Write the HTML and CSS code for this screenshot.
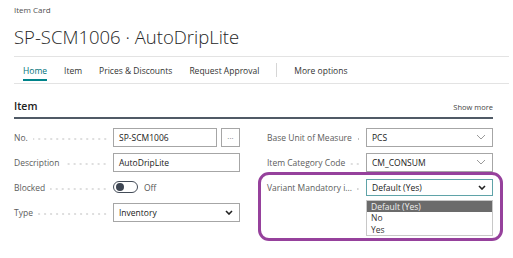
FILE: index.html
```html
<!DOCTYPE html>
<html lang="en">
  <head>
    <meta charset="UTF-8" />
    <title>Item Card</title>
    <link rel="stylesheet" href="styles.css">
  </head>
  <body>
    <div class="page">
      <div class="caption">Item Card</div>
      <h1 class="title">SP-SCM1006 · AutoDripLite</h1>

      <nav class="actions">
        <span class="action active">Home</span>
        <span class="action">Item</span>
        <span class="action">Prices &amp; Discounts</span>
        <span class="action">Request Approval</span>
        <span class="divider"></span>
        <span class="action">More options</span>
      </nav>

      <section class="fasttab">
        <div class="tab-head">
          <span class="tab-title">Item</span>
          <span class="show-more">Show more</span>
        </div>

        <div class="fields">
          <div class="column">
            <div class="field">
              <span class="label">No.</span>
              <div class="control with-button">
                <span class="input">SP-SCM1006</span>
                <span class="assist">···</span>
              </div>
            </div>
            <div class="field">
              <span class="label">Description</span>
              <div class="control">
                <span class="input">AutoDripLite</span>
              </div>
            </div>
            <div class="field">
              <span class="label">Blocked</span>
              <div class="control toggle-wrap">
                <span class="toggle"><span class="knob"></span></span>
                <span class="toggle-text">Off</span>
              </div>
            </div>
            <div class="field">
              <span class="label">Type</span>
              <div class="control">
                <span class="input select">
                  Inventory
                  <svg class="chev" width="8" height="5" viewBox="0 0 8 5"><path d="M1 1 L4 4 L7 1" fill="none" stroke="#222" stroke-width="1.6"/></svg>
                </span>
              </div>
            </div>
          </div>

          <div class="column">
            <div class="field">
              <span class="label">Base Unit of Measure</span>
              <div class="control">
                <span class="input select">
                  PCS
                  <svg class="chev" width="10" height="6" viewBox="0 0 10 6"><path d="M1 1 L5 5 L9 1" fill="none" stroke="#9a9a9a" stroke-width="1"/></svg>
                </span>
              </div>
            </div>
            <div class="field">
              <span class="label">Item Category Code</span>
              <div class="control">
                <span class="input select">
                  CM_CONSUM
                  <svg class="chev" width="10" height="6" viewBox="0 0 10 6"><path d="M1 1 L5 5 L9 1" fill="none" stroke="#9a9a9a" stroke-width="1"/></svg>
                </span>
              </div>
            </div>
            <div class="field">
              <span class="label">Variant Mandatory i...</span>
              <div class="control">
                <span class="input select focused">
                  Default (Yes)
                  <svg class="chev" width="8" height="5" viewBox="0 0 8 5"><path d="M1 1 L4 4 L7 1" fill="none" stroke="#222" stroke-width="1.6"/></svg>
                </span>
                <ul class="options">
                  <li class="selected">Default (Yes)</li>
                  <li>No</li>
                  <li>Yes</li>
                </ul>
              </div>
              <span class="callout"></span>
            </div>
          </div>
        </div>
      </section>
    </div>
  </body>
</html>
```

FILE: styles.css
```css
body {
  margin: 0;
  background: #fff;
  font-family: "Open Sans", "Noto Sans", sans-serif;
  color: #212121;
}
.page {
  box-sizing: border-box;
  min-height: 258px;
  padding: 4px 4px 0 14px;
}
.caption {
  font-size: 8px;
  color: #505050;
  line-height: 12px;
}
.title {
  margin: 8px 0 0;
  font-size: 18.5px;
  font-weight: 300;
  line-height: 26px;
  color: #262626;
}
.actions {
  display: flex;
  align-items: center;
  height: 26px;
  margin-top: 6px;
  border-top: 1px solid #e3e3e3;
  border-bottom: 1px solid #e3e3e3;
}
.action {
  position: relative;
  margin-left: 9px;
  margin-right: 8px;
  font-size: 8.5px;
  color: #333;
}
.action.active {
  color: #00727a;
}
.action.active::after {
  content: "";
  position: absolute;
  left: 0;
  right: 0;
  bottom: -5px;
  height: 2px;
  background: #00838a;
}
.divider {
  width: 1px;
  height: 14px;
  margin: 0 8px 0 9px;
  background: #d6d6d6;
}
.fasttab {
  margin-right: 16px;
}
.tab-head {
  display: flex;
  justify-content: space-between;
  align-items: flex-end;
  padding-top: 15px;
  padding-bottom: 4px;
  border-bottom: 2px solid #505a66;
}
.tab-title {
  font-size: 10.5px;
  font-weight: 600;
  line-height: 14px;
}
.show-more {
  font-size: 7.5px;
  color: #444;
  line-height: 12px;
}
.fields {
  display: grid;
  grid-template-columns: 226px 226px;
  column-gap: 27px;
  margin-top: 8px;
}
.field {
  position: relative;
  display: flex;
  align-items: center;
  height: 20px;
  margin-bottom: 5px;
}
.label {
  display: flex;
  align-items: center;
  width: 99px;
  font-size: 8.5px;
  color: #5c5c5c;
  white-space: nowrap;
}
.label::after {
  content: "";
  flex: 1;
  height: 2px;
  margin: 3px 5px 0 5px;
  background-image: radial-gradient(circle, #b8b8b8 0.6px, transparent 0.8px);
  background-size: 6px 2px;
  background-position: right;
}
.control {
  position: relative;
  display: flex;
  width: 127px;
}
.input {
  flex: 1;
  display: flex;
  align-items: center;
  justify-content: space-between;
  box-sizing: border-box;
  height: 19px;
  padding: 0 6px 0 5px;
  border: 1px solid #a6a6a6;
  font-size: 8.5px;
  color: #212121;
}
.with-button .input {
  margin-right: 4px;
}
.assist {
  display: flex;
  align-items: center;
  justify-content: center;
  width: 19px;
  height: 19px;
  box-sizing: border-box;
  border: 1px solid #a6a6a6;
  font-size: 8px;
  color: #666;
}
.toggle-wrap {
  align-items: center;
}
.toggle {
  display: flex;
  align-items: center;
  box-sizing: border-box;
  width: 25px;
  height: 12px;
  padding-left: 2px;
  border: 1px solid #444c58;
  border-radius: 6px;
}
.knob {
  width: 8px;
  height: 8px;
  border-radius: 50%;
  background: #3e4653;
}
.toggle-text {
  margin-left: 6px;
  font-size: 8.5px;
  color: #555;
}
.chev {
  flex: none;
}
.focused {
  height: 17px;
  border-color: #5fa3a8;
}
.options {
  position: absolute;
  top: 21px;
  left: 0;
  right: 0;
  margin: 0;
  padding: 0;
  list-style: none;
  border: 1px solid #c8c8c8;
  background: #fff;
  font-size: 8.5px;
  line-height: 11.5px;
  color: #333;
}
.options li {
  padding-left: 4px;
}
.options .selected {
  background: #6b6b6b;
  color: #f0f0f0;
}
.callout {
  position: absolute;
  left: -9px;
  top: -5px;
  width: 245px;
  height: 69px;
  box-sizing: border-box;
  border: 3px solid #96419c;
  border-radius: 11px;
}
```
